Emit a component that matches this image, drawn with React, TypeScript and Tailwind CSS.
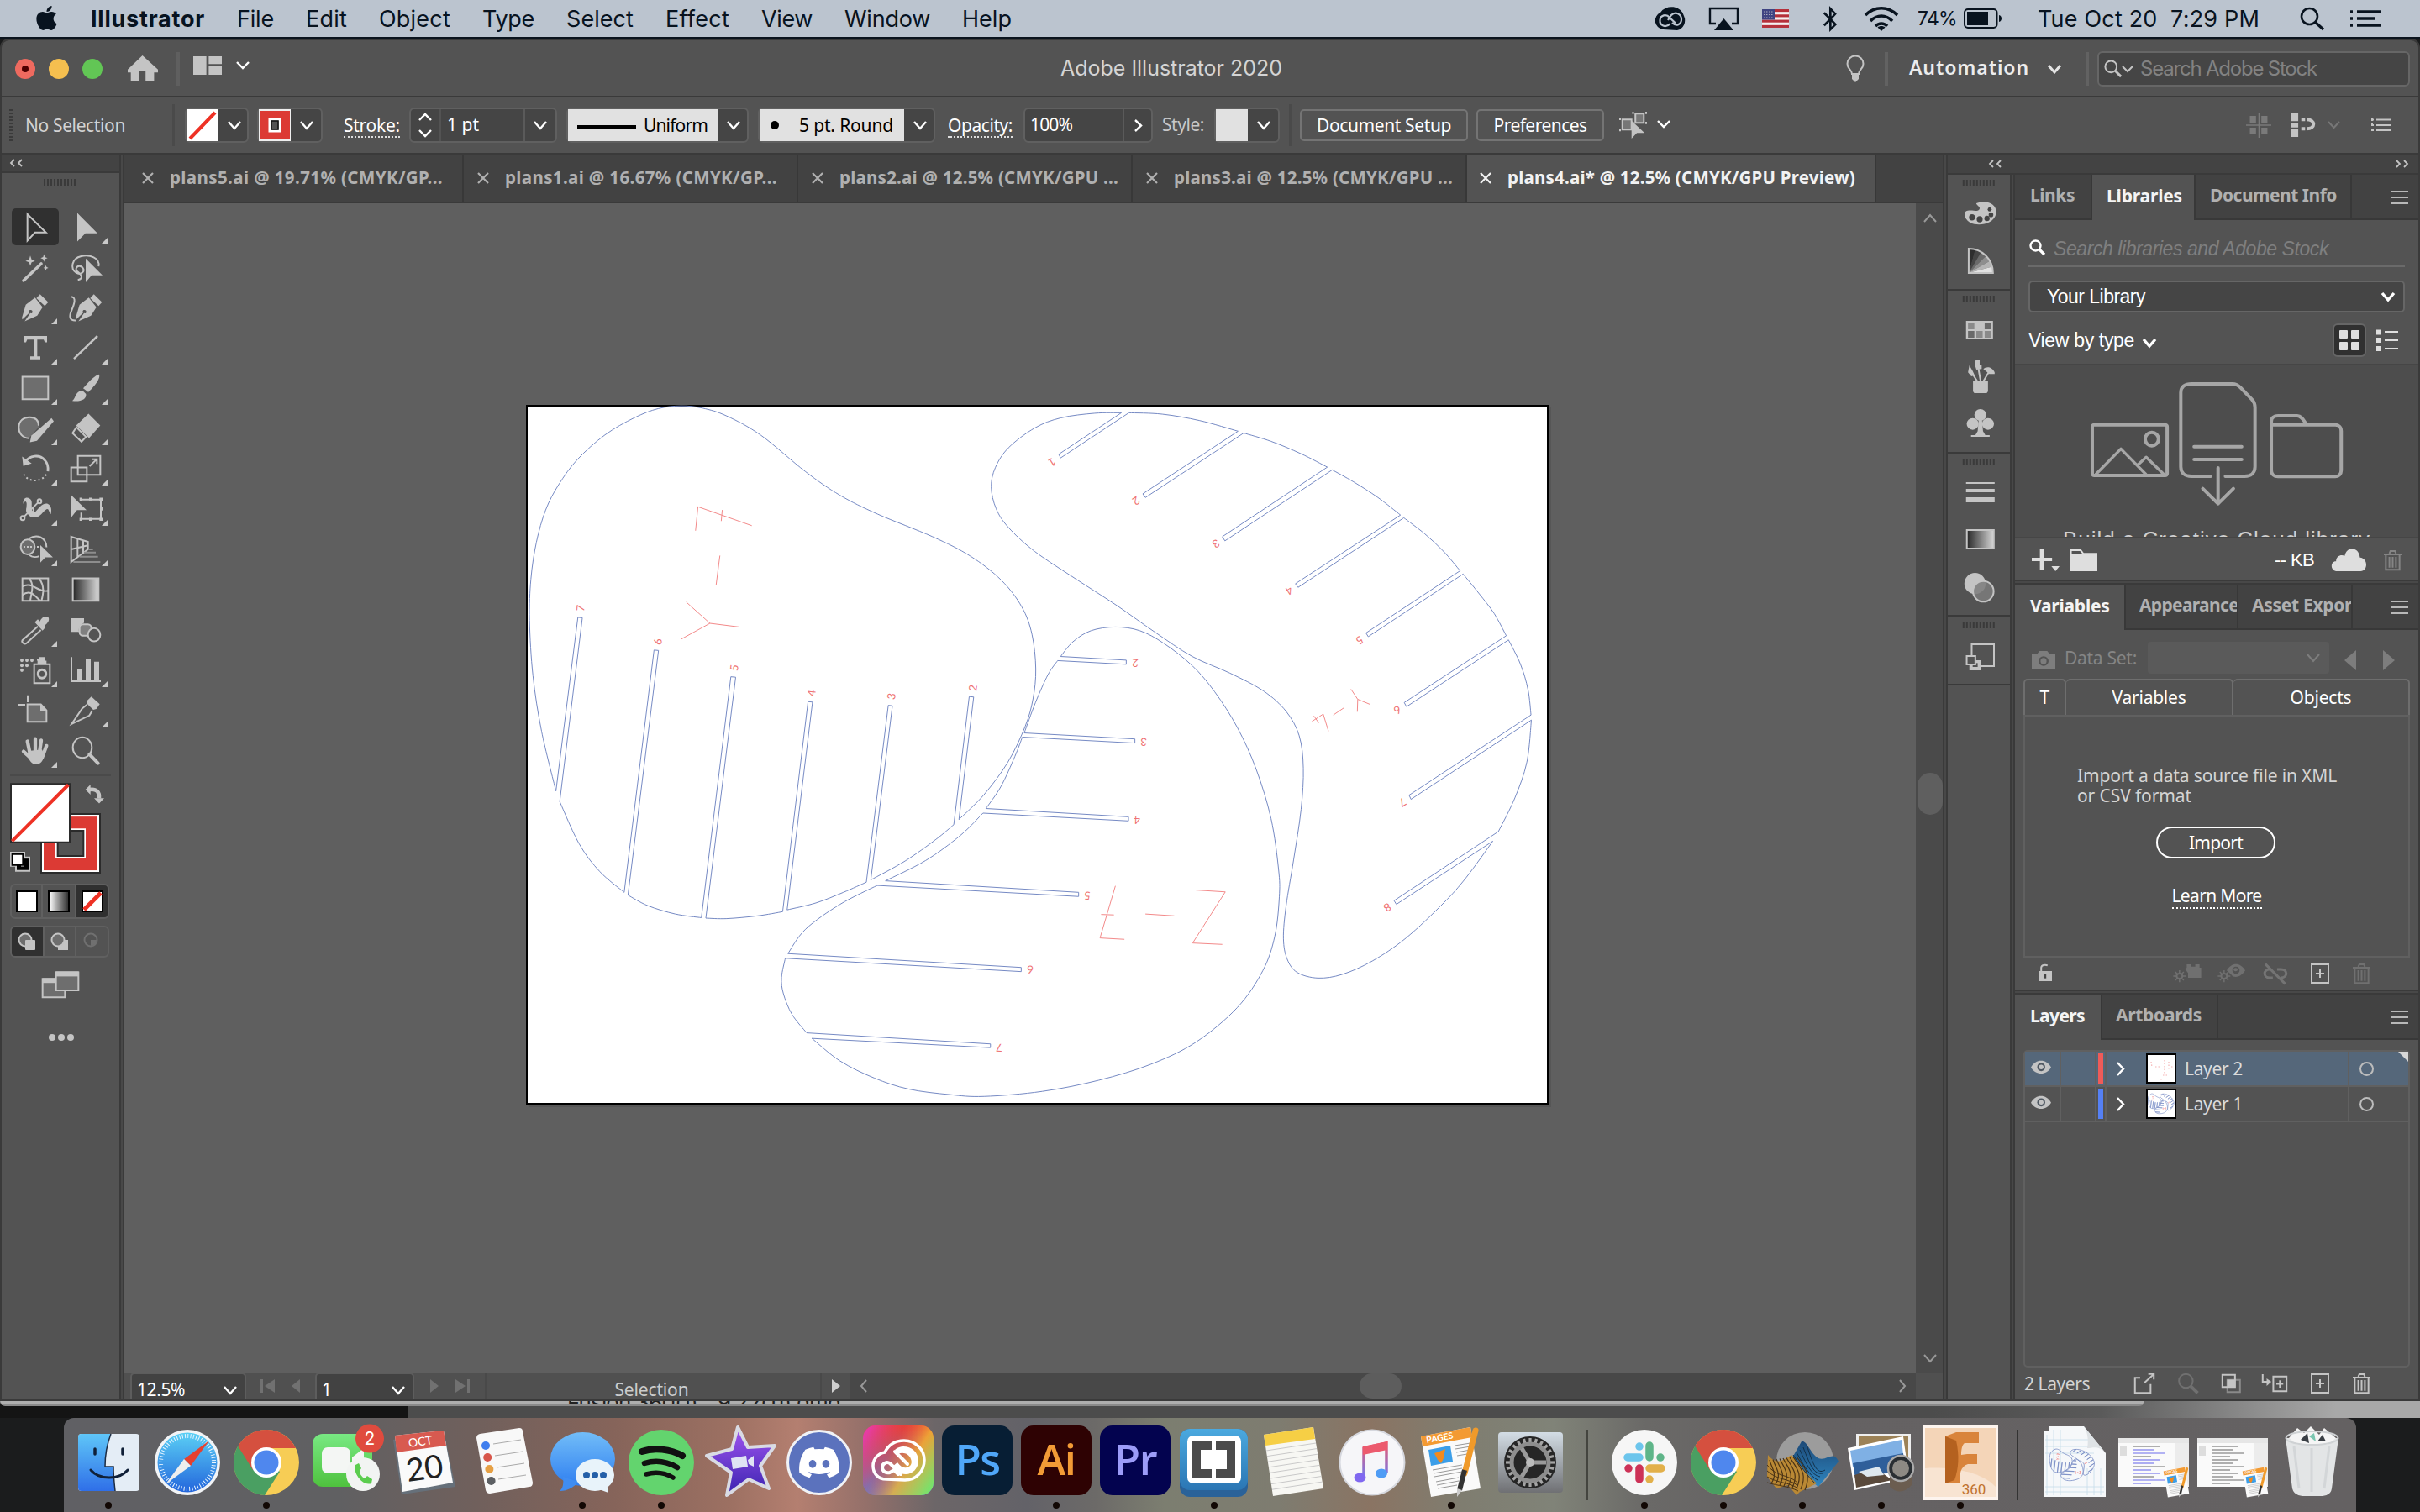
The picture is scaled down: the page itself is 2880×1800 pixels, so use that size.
import React, { useLayoutEffect, useRef, useState } from "react";
import { FaApple, FaDiscord, FaBluetoothB } from "react-icons/fa";

type P = { children?: React.ReactNode; className?: string };
const G = "#c4c4c4";

/* Text that is tracked so that it fills a given width */
function Txt({ w, children, className = "" }: { w: number; children: string; className?: string }) {
  const ref = useRef<HTMLSpanElement>(null);
  const [ls, setLs] = useState(0);
  useLayoutEffect(() => {
    if (ref.current) setLs((w - ref.current.getBoundingClientRect().width) / children.length);
  }, [w, children]);
  return (
    <span ref={ref} className={"inline-block shrink-0 whitespace-pre " + className} style={{ letterSpacing: ls }}>
      {children}
    </span>
  );
}

function Ico({ b, w, h, className = "", children }: P & { b: number[]; w: number; h: number }) {
  return (
    <svg
      viewBox={b.join(" ")}
      width={w}
      height={h}
      preserveAspectRatio="none"
      fill="none"
      className={"block shrink-0 overflow-visible [&_*]:[vector-effect:non-scaling-stroke] " + className}
    >
      {children}
    </svg>
  );
}

function Chev({ className = "", d = "down", w = 14, h = 8, s = 2.4, c = "#fff" }: { className?: string; d?: string; w?: number; h?: number; s?: number; c?: string }) {
  const p: Record<string, string> = {
    down: "M0 0L50 100L100 0",
    up: "M0 100L50 0L100 100",
    left: "M100 0L0 50L100 100",
    right: "M0 0L100 50L0 100",
  };
  return (
    <Ico b={[0, 0, 100, 100]} w={w} h={h} className={className}>
      <path d={p[d]} stroke={c} strokeWidth={s} />
    </Ico>
  );
}

const UI = "font-['Noto_Sans',sans-serif]";
const SF = "font-['Inter',sans-serif]";
const HV = "font-['Liberation_Sans',sans-serif]";

/* ---------------------------------------------------------------- menu bar */

const menus: [string, number][] = [["File", 44], ["Edit", 49], ["Object", 85], ["Type", 62], ["Select", 80], ["Effect", 76], ["View", 61], ["Window", 102], ["Help", 59]];

function MenuBar() {
  return (
    <div className={"flex h-[44px] items-center bg-[#bbc4cf] text-[27px] leading-[44px] text-[#08131f] " + SF}>
      <FaApple className="ml-[40px] h-[33px] w-[31px] -translate-y-px" />
      <Txt w={136} className="ml-[37px] pt-px font-bold">Illustrator</Txt>
      <div className="ml-[38px] flex gap-[38px] pt-px">
        {menus.map(([m, w]) => <Txt key={m} w={w}>{m}</Txt>)}
      </div>
      <div className="ml-auto flex items-center pr-[46px]">
        <Ico b={[0, 0, 39, 27]} w={39} h={27}>
          <path d="M11 26A10.500 10.500 0 0 1 8 6A15 13 0 0 1 36 10A12 12 0 0 1 28 27Z" fill="#08131f" />
          <path d="M20 19C14 25 7 21 7.500 15C8 9 15 7 19 12L26 18.500M17 15L21 9C26 4 33 8 33 14C33 20 27 23 22 18" stroke="#bbc4cf" strokeWidth="2.200" />
        </Ico>
        <Ico b={[0, 0, 37, 28]} w={37} h={28} className="ml-[26px]">
          <path d="M9 20H2V2H35V20H28" stroke="#08131f" strokeWidth="2.400" />
          <path d="M18.500 14L30 28H7Z" fill="#08131f" />
        </Ico>
        <Ico b={[0, 0, 32, 22]} w={32} h={22} className="ml-[27px]">
          <rect width="32" height="22" fill="#f4f0f0" />
          {[0, 2, 4, 6].map((i) => <rect key={i} y={i * 3.14} width="32" height="3.140" fill="#b5303a" />)}
          <rect width="15" height="12.500" fill="#3f4482" />
          <path d="M2 3H14M2 6.500H14M2 10H14" stroke="#aab" strokeDasharray="1.500 1.500" />
        </Ico>
        <FaBluetoothB className="ml-[37px] h-[31px] w-[24px]" />
        <Ico b={[0, 0, 42, 29]} w={42} h={29} className="ml-[28px]">
          <path d="M2 10C13 -1 29 -1 40 10M8 17C16 9 26 9 34 17M14 23C18 19 24 19 28 23" stroke="#08131f" strokeWidth="3.600" />
          <path d="M16.500 24.500C19 22.500 23 22.500 25.500 24.500L21 29Z" fill="#08131f" />
        </Ico>
        <Txt w={47} className="ml-[22px] text-[23px]">74%</Txt>
        <Ico b={[0, 0, 47, 24]} w={47} h={24} className="ml-[8px]">
          <rect x="1" y="1" width="38.500" height="22" rx="4" stroke="#08131f" strokeWidth="2" />
          <rect x="4" y="4" width="25" height="16" fill="#08131f" />
          <path d="M42 8C46 9 46 15 42 16Z" fill="#08131f" />
        </Ico>
        <Txt w={264} className="ml-[41px] pt-px">Tue Oct 20  7:29 PM</Txt>
        <Ico b={[0, 0, 30, 28]} w={30} h={28} className="ml-[48px]">
          <circle cx="11.500" cy="11.500" r="9.500" stroke="#08131f" strokeWidth="2.600" />
          <path d="M18.500 18.500L28 27" stroke="#08131f" strokeWidth="3.200" />
        </Ico>
        <Ico b={[0, 0, 37, 20]} w={37} h={20} className="ml-[30px]">
          <path d="M0 2H3M8 2H37M0 10H3M8 10H30M0 18H3M8 18H37" stroke="#08131f" strokeWidth="3.600" />
        </Ico>
      </div>
    </div>
  );
}

/* --------------------------------------------------------------- title bar */

function TitleBar() {
  return (
    <div className="relative flex h-[66px] items-center bg-[#535353] pt-px">
      <div className="ml-[16px] flex gap-[16px]">
        <div className="flex size-[24px] items-center justify-center rounded-full bg-[#ee6a5f]"><div className="size-[8px] rounded-full bg-[#4d0000]" /></div>
        <div className="size-[24px] rounded-full bg-[#f5bf4f]" />
        <div className="size-[24px] rounded-full bg-[#62c655]" />
      </div>
      <Ico b={[166, 195, 39, 93]} w={36} h={31} className="ml-[30px]">
        <path d="M185 195L205 245V256H200V288H189V252H181V288H170V256H166V245Z" fill={G} />
      </Ico>
      <div className="ml-[22px] h-[40px] w-[4px] bg-[#5f5f5f]" />
      <Ico b={[250, 198, 37, 66]} w={34} h={22} className="mb-[8px] ml-[16px]">
        <path d="M250 198H267V264H250ZM270 198H287V226H270ZM270 234H287V264H270Z" fill={G} />
      </Ico>
      <Chev w={14} h={7} className="mb-[8px] ml-[18px]" />
      <div className="absolute inset-x-0 flex justify-center pr-[92px] text-[25px] text-[#d4d4d4]">
        <Txt w={264} className={SF}>Adobe Illustrator 2020</Txt>
      </div>
      <div className="ml-auto flex items-center">
        <Ico b={[0, 0, 22, 32]} w={22} h={32} className="mr-[24px]">
          <path d="M7 22C7 17 1.500 16 1.500 10A9.500 9.500 0 0 1 20.500 10C20.500 16 15 17 15 22Z" stroke={G} strokeWidth="2" />
          <path d="M7 22H15V28L11 32L7 28Z" fill={G} />
        </Ico>
        <div className="h-[40px] w-[4px] bg-[#626262]" />
        <Txt w={143} className={"-mt-[3px] ml-[25px] text-[23px] font-semibold text-[#ececec] " + UI}>Automation</Txt>
        <Chev w={14} h={8} s={3} className="ml-[23px]" c="#e4e4e4" />
        <div className="ml-[30px] h-[40px] w-[4px] bg-[#626262]" />
        <div className="mr-[10px] ml-[10px] flex h-[42px] w-[372px] items-center rounded-[6px] border-2 border-[#666] bg-[#454545]">
          <Ico b={[0, 0, 24, 24]} w={22} h={22} className="ml-[6px]">
            <circle cx="9" cy="9" r="7.500" stroke={G} strokeWidth="2" />
            <path d="M14.500 14.500L22 22" stroke={G} strokeWidth="3" />
          </Ico>
          <Chev w={12} h={6} s={2} c={G} />
          <Txt w={210} className={"ml-[9px] text-[24px] text-[#828282] " + SF}>Search Adobe Stock</Txt>
        </div>
      </div>
    </div>
  );
}

/* ------------------------------------------------------------- control bar */

const field = "flex h-[42px] shrink-0 items-center rounded-[6px] border-2 border-[#606060] bg-[#454545] ";

function ControlBar() {
  return (
    <div className={"flex h-[66px] items-center bg-[#535353] text-[21px] text-white " + UI}>
      <div className="ml-[9px] h-[38px] w-[4px] bg-[repeating-linear-gradient(#3a3a3a_0_2px,transparent_2px_4px)]" />
      <Txt w={119} className="ml-[15px] pt-px text-[#d2d2d2]">No Selection</Txt>
      <div className="ml-[56px] h-[50px] w-[3px] bg-[#4a4a4a]" />
      <div className={field + "ml-[12px] w-[76px]"}>
        <Ico b={[0, 0, 38, 38]} w={38} h={38}>
          <rect width="38" height="38" fill="#fff" />
          <path d="M4 35L34 4" stroke="#ee3124" strokeWidth="4" />
        </Ico>
        <Chev className="ml-[12px]" />
      </div>
      <div className={field + "ml-[10px] w-[78px]"}>
        <Ico b={[0, 0, 38, 38]} w={38} h={38}>
          <rect width="38" height="38" fill="#eee" />
          <rect x="1" y="2" width="36" height="34" fill="#dc3a34" />
          <rect x="13" y="12" width="12" height="14" fill="#535353" stroke="#fff" strokeWidth="3" />
          <rect x="15" y="14" width="8" height="10" stroke="#111" strokeWidth="1.500" />
        </Ico>
        <Chev className="ml-[12px]" />
      </div>
      <div className="mt-[3px] ml-[25px] border-b-2 border-dotted border-[#ddd] leading-[25px]"><Txt w={67}>Stroke:</Txt></div>
      <div className={field + "ml-[11px] w-[176px]"}>
        <div className="flex h-full w-[36px] flex-col items-center justify-between border-r-2 border-[#535353] py-[6px]">
          <Chev d="up" h={7} /><Chev h={7} />
        </div>
        <Txt w={38} className="ml-[7px]">1 pt</Txt>
        <div className="ml-auto flex h-full w-[38px] items-center justify-center border-l-2 border-[#5a5a5a]"><Chev /></div>
      </div>
      <div className={field + "ml-[11px] w-[217px]"}>
        <div className="flex h-[38px] w-[178px] items-center bg-[#e1e1e1] text-black">
          <div className="mt-[3px] ml-[11px] h-[4px] w-[70px] bg-black" />
          <Txt w={76} className="mt-[2px] ml-[9px]">Uniform</Txt>
        </div>
        <Chev className="ml-[12px]" />
      </div>
      <div className={field + "ml-[11px] w-[211px]"}>
        <div className="flex h-[38px] w-[172px] items-center bg-[#e1e1e1] text-black">
          <div className="ml-[13px] size-[10px] rounded-full bg-black" />
          <Txt w={112} className="mt-[2px] ml-[24px]">5 pt. Round</Txt>
        </div>
        <Chev className="ml-[12px]" />
      </div>
      <div className="mt-[2px] ml-[15px] border-b-2 border-dotted border-[#ddd] leading-[25px]"><Txt w={77}>Opacity:</Txt></div>
      <div className={field + "ml-[13px] w-[154px]"}>
        <Txt w={50} className="ml-[6px]">100%</Txt>
        <div className="ml-auto flex h-full w-[34px] items-center justify-center border-l-2 border-[#5a5a5a]"><Chev d="right" w={7} h={13} /></div>
      </div>
      <Txt w={50} className="ml-[11px] text-[#c8c8c8]">Style:</Txt>
      <div className={field + "ml-[12px] w-[78px]"}>
        <div className="h-[38px] w-[38px] bg-[#e1e1e1]" />
        <Chev className="ml-[12px]" />
      </div>
      <div className="ml-[11px] h-[50px] w-[3px] bg-[#4a4a4a]" />
      <div className="ml-[10px] flex h-[38px] w-[200px] items-center justify-center rounded-[5px] border-2 border-[#747474] pt-[2px]"><Txt w={160}>Document Setup</Txt></div>
      <div className="ml-[10px] flex h-[38px] w-[152px] items-center justify-center rounded-[5px] border-2 border-[#747474] pt-[2px]"><Txt w={111}>Preferences</Txt></div>
      <Ico b={[534, 396, 34, 96]} w={31} h={32} className="ml-[19px]">
        <path d="M554 403H565V436H554ZM537 424H549V460H537Z" fill="#777" stroke={G} strokeWidth="2" />
        <path d="M551 396V404M568 396V404M551 440V432M568 440V432M534 418V426M534 466V458" stroke={G} strokeWidth="2" />
        <path d="M549 428L566 472L556 472L549 492Z" fill={G} />
      </Ico>
      <Chev h={7} className="mb-[4px] ml-[14px]" />
      <div className="ml-auto flex items-center pr-[32px] pb-px">
        <Ico b={[1339, 396, 33, 90]} w={30} h={30} className="mr-[23px]">
          <path d="M1344 408H1352V432H1344ZM1359 408H1367V432H1359ZM1344 450H1352V474H1344ZM1359 450H1367V474H1359Z" fill="#7a7a7a" />
          <path d="M1339 441H1372M1356 396V486" stroke="#7a7a7a" strokeWidth="1.500" />
        </Ico>
        <Ico b={[1397, 402, 33, 84]} w={30} h={28} className="mr-[15px]">
          <path d="M1397 402H1407V430H1397ZM1397 437H1407V452H1397ZM1397 459H1407V486H1397Z" fill={G} />
          <path d="M1411 424H1416M1411 457H1416" stroke={G} strokeWidth="4" />
          <path d="M1418 424C1430 424 1430 457 1418 457" stroke={G} strokeWidth="4" />
        </Ico>
        <Chev w={13} h={7} c="#777" s={2} />
        <Ico b={[0, 0, 24, 17]} w={24} h={17} className="ml-[38px]">
          <path d="M1 1V4M1 7V10M1 13V16M0 2.500H3M0 9H3M0 15H3M6 2.500H24M6 9H24M6 15H24" stroke={G} strokeWidth="2" />
        </Ico>
      </div>
    </div>
  );
}

/* ----------------------------------------------------------------- toolbar */

function Corner() {
  return <div className="absolute right-[4px] bottom-[4px] size-0 border-b-[7px] border-l-[7px] border-b-[#c9c9c9] border-l-transparent" />;
}

const S = { stroke: G, strokeWidth: 2 };
const F = { fill: G };
const tools: [React.ReactNode, boolean][] = [
  [<path d="M98 210V298L125 271H164Z" {...S} />, false],
  [<path d="M276 206V301L305 274H348Z" {...F} />, true],
  [<g><path d="M84 431L147 375" stroke={G} strokeWidth="3.600" strokeLinecap="round" /><path d="M108 348L113 361L125 366L113 370L108 382L104 370L91 366L104 361ZM157 343L160 353L170 356L160 360L157 369L154 360L145 356L154 353ZM164 380L166 386L173 389L166 391L164 398L161 391L155 389L161 386Z" {...F} /></g>, false],
  [<g><path d="M352 384C358 355 320 344 290 350C255 357 250 392 272 405C290 415 305 400 295 388C280 375 265 390 275 400C290 410 300 425 278 429" {...S} /><path d="M306 358V437L327 414H366Z" {...F} /></g>, false],
  [<g><path d="M78 556L92 512L125 488L152 520L133 548L88 567L108 540C118 543 119 530 110 529C102 529 103 535 105 538L80 561Z" {...F} /><path d="M143 477L172 503L160 516L130 490Z" {...F} /></g>, true],
  [<g><path d="M252 485C275 485 265 510 255 532C245 555 250 565 270 564" {...S} /><path d="M270 556L284 512L317 488L344 520L325 548L280 567L300 540C310 543 311 530 302 529C294 529 295 535 297 538L272 561Z" {...F} /><path d="M335 477L364 503L352 516L322 490Z" {...F} /></g>, false],
  [<path d="M84 616H168V637H160L156 628H133V684H144V694H108V684H120V628H97L93 637H84Z" {...F} />, true],
  [<path d="M264 692L348 616" stroke={G} strokeWidth="2.500" />, true],
  [<rect x="80" y="752" width="92" height="75" fill="#6e6e6e" stroke={G} strokeWidth="2" />, true],
  [<g><path d="M354 744C360 760 330 790 315 803L297 790C310 775 340 745 354 744Z" {...F} /><path d="M294 797L307 809C310 828 285 836 258 832C272 822 268 800 294 797Z" {...F} /></g>, true],
  [<g><path d="M103 957C80 955 66 940 67 920C68 898 85 886 107 887C130 888 140 900 138 920Z" fill="#6e6e6e" /><path d="M103 957C80 955 66 940 67 920C68 898 85 886 107 887C130 888 138 900 138 915" stroke={G} strokeWidth="2" /><path d="M184 890L192 900L132 965L107 970L112 948Z" {...F} /></g>, true],
  [<g><path d="M316 875L358 914L318 956L272 914Z" {...F} /><path d="M273 920L307 952L291 968L259 940Z" {...S} /></g>, true],
  [<g><path d="M90 1035C105 1015 140 1008 160 1030C170 1040 173 1050 171 1067" stroke={G} strokeWidth="2.800" /><path d="M79 1018L83 1049L113 1041Z" {...F} /><path d="M85 1077C100 1105 150 1105 167 1075" stroke={G} strokeWidth="2" strokeDasharray="2 3" /></g>, true],
  [<path d="M278 1016H358V1079H278ZM254 1054H310V1101H254ZM320 1050L344 1028M330 1027H346V1042" {...S} />, true],
  [<g><path d="M83 1175C80 1150 105 1150 112 1165C117 1180 105 1200 125 1203C140 1190 150 1172 170 1175C185 1182 184 1195 182 1210L175 1200C170 1180 155 1205 140 1216C125 1225 100 1222 95 1200C92 1185 100 1172 90 1167Z" {...F} /><path d="M85 1219L137 1170" {...S} /><circle cx="81" cy="1223" r="7" fill="#535353" {...S} /><circle cx="141" cy="1167" r="7" fill="#535353" {...S} /><circle cx="108" cy="1197" r="12" {...S} /></g>, true],
  [<g><path d="M290 1161H360V1226H290V1205" {...S} /><path d="M284 1155H294V1165H284ZM318 1155H329V1164H318ZM355 1155H366V1165H355ZM355 1222H366V1232H355ZM318 1222H329V1232H318ZM284 1222H294V1232H284ZM358 1187H366V1198H358Z" {...F} /><path d="M253 1145V1222L275 1196H309Z" {...F} /></g>, true],
  [<g><circle cx="99" cy="1319" r="25" fill="#6e6e6e" {...S} /><path d="M103 1292C130 1275 165 1285 166 1320M105 1346C115 1354 130 1354 140 1350" {...S} /><path d="M84 1319H140" stroke={G} strokeWidth="2" strokeDasharray="2 2" /><path d="M144 1313V1371L162 1354H189Z" {...F} /></g>, true],
  [<g><path d="M254 1285L314 1302V1327L254 1369ZM277 1291V1354M297 1297V1340M254 1327L314 1314" {...S} /><path d="M316 1327H332M300 1338H342M284 1352H350M262 1369H358" stroke="#8d8d8d" strokeWidth="2" /></g>, true],
  [<path d="M80 1424H172V1499H80ZM80 1452C110 1430 140 1475 172 1465M80 1480C110 1455 130 1490 145 1499M105 1424C125 1450 110 1475 108 1499M140 1424C160 1450 155 1475 148 1499" {...S} />, false],
  [<rect x="260" y="1424" width="92" height="75" fill="url(#ramp)" stroke={G} strokeWidth="2" />, false],
  [<g><path d="M135 72L80 118C75 128 90 133 96 127L146 84" {...S} /><path d="M124 58L135 48L143 55C150 38 165 36 173 42C178 52 170 62 160 68L163 74L152 86Z" {...F} /></g>, true],
  [<g><path d="M252 45H300V60C285 64 280 75 282 90H252Z" {...F} /><rect x="284" y="65" width="42" height="38" rx="12" fill="#808080" stroke={G} strokeWidth="2" /><circle cx="336" cy="100" r="22" fill="#535353" {...S} /></g>, false],
  [<g><path d="M122 198H178V261H122Z" {...S} /><circle cx="150" cy="230" r="14" stroke={G} strokeWidth="3" /><path d="M138 174H162V186H166V196H134V186H132V179H138Z" {...F} />{[[78, 185], [96, 185], [114, 185], [78, 202], [96, 202], [78, 218]].map(([x, y]) => <circle key={x + "-" + y} cx={x} cy={y} r="6" {...F} />)}</g>, true],
  [<g><path d="M255 174V255H360" {...S} /><path d="M276 213H294V255H276ZM306 179H324V255H306ZM336 190H354V255H336Z" {...F} /></g>, true],
  [<g><path d="M66 333H90M99 302V325" stroke={G} strokeWidth="2" /><path d="M98 332H146L166 352V390H98Z" fill="#6e6e6e" {...S} /><path d="M144 332V353H167Z" {...F} /></g>, false],
  [<g><path d="M326 306L356 331L344 347L333 350L309 328L313 318Z" {...F} /><path d="M310 333L293 346L256 397L319 369L330 352" {...S} /></g>, true],
  [<g><path d="M108 500L98 455M126 500L126 447M140 500L147 452M150 510L166 470M115 515L84 489" stroke={G} strokeWidth="4.300" strokeLinecap="round" /><path d="M103 487L150 482L158 500C155 520 145 532 128 532C112 532 105 518 98 505Z" {...F} /></g>, true],
  [<g><circle cx="294" cy="476" r="34" {...S} /><path d="M319 498L350 528" stroke={G} strokeWidth="4" strokeLinecap="round" /></g>, false],
];

function Toolbar() {
  return (
    <div className="flex w-[140px] shrink-0 flex-col bg-[#535353]">
      <div className="h-[22px] border-b-2 border-[#3a3a3a] bg-[#434343] pt-[6px] pl-[11px]">
        <div className="flex gap-[5px]"><Chev d="left" w={4} h={8} s={1.800} c={G} /><Chev d="left" w={4} h={8} s={1.800} c={G} /></div>
      </div>
      <div className="mt-[7px] ml-[50px] h-[8px] w-[38px] bg-[repeating-linear-gradient(90deg,#3a3a3a_0_2px,transparent_2px_4px)]" />
      <div className="mt-[25px] ml-[10px] grid w-[120px] grid-cols-2">
        {tools.map(([art, more], i) => {
          const r = Math.floor(i / 2);
          const y = r < 10 ? 184.8 + 134.4 * r : 16.8 + 134.4 * (r - 10);
          return (
            <div key={i} className="relative h-[48px] w-[60px]">
              {i === 0 && <div className="absolute top-[2px] left-[2px] h-[44px] w-[56px] rounded-[5px] bg-[#303030]" />}
              <Ico b={[i % 2 ? 216 : 36, y, 180, 134.4]} w={60} h={48} className="relative">{art}</Ico>
              {more && <Corner />}
            </div>
          );
        })}
      </div>
      <div className="mt-[4px] ml-[10px] h-[2px] w-[120px] bg-[#4a4a4a]" />
      <Ico b={[36, 588, 324, 308]} w={108} h={110} className="mt-[6px] ml-[10px]">
        <rect x="147" y="697" width="210" height="196" fill="#fff" stroke="#2b2b2b" strokeWidth="2" />
        <rect x="156" y="706" width="192" height="179" fill="#dc3a34" />
        <rect x="201" y="748" width="102" height="94" fill="#535353" stroke="#fff" strokeWidth="2" />
        <rect x="206" y="753" width="92" height="84" stroke="#2b2b2b" strokeWidth="2" />
        <rect x="39" y="597" width="210" height="195" fill="#fff" stroke="#2b2b2b" strokeWidth="2" />
        <path d="M43 788L244 600" stroke="#ee3124" strokeWidth="4" />
        <path d="M320 616C345 612 356 625 354 645" stroke={G} strokeWidth="4.500" />
        <path d="M305 616L323 599V633ZM336 645H372L354 662Z" {...F} />
        <path d="M36 823H90V839H108V890H54V873H36Z" fill={G} />
        <rect x="60" y="846" width="42" height="38" fill="#000" />
        <rect x="75" y="860" width="12" height="12" fill="#fff" />
        <rect x="44" y="831" width="38" height="36" fill="#fff" stroke="#000" strokeWidth="2" />
      </Ico>
      <div className="mt-[12px] ml-[10px] flex h-[42px] w-[118px] rounded-[6px] border-2 border-[#606060]">
        <div className="flex w-[37px] items-center justify-center border-r-2 border-[#606060]"><div className="size-[26px] border-2 border-black bg-white" /></div>
        <div className="flex w-[40px] items-center justify-center border-r-2 border-[#606060]"><div className="size-[26px] border-2 border-black bg-gradient-to-r from-white to-[#333]" /></div>
        <div className="flex flex-1 items-center justify-center rounded-r-[4px] bg-[#303030]">
          <Ico b={[0, 0, 26, 26]} w={26} h={26}><rect x="1" y="1" width="24" height="24" fill="#fff" stroke="#000" strokeWidth="2" /><path d="M3 23L23 3" stroke="#ee3124" strokeWidth="5" /></Ico>
        </div>
      </div>
      <div className="mt-[8px] ml-[10px] flex h-[38px] w-[118px] rounded-[6px] border-2 border-[#606060]">
        {[0, 1, 2].map((i) => (
          <div key={i} className={"flex flex-1 items-center justify-center " + (i < 2 ? "border-r-2 border-[#606060] " : "") + (i === 0 ? "rounded-l-[4px] bg-[#303030]" : "")}>
            <Ico b={[0, 0, 20, 20]} w={20} h={20}>
              <circle cx="8" cy="8" r="7.500" fill={i === 2 ? "#535353" : "#6e6e6e"} stroke={i === 2 ? "#707070" : G} strokeWidth="2" />
              {i === 0 && <rect x="8" y="8" width="12" height="12" rx="1" fill={G} />}
              {i === 1 && <path d="M16 8H20V20H8V16C13 15 15 13 16 8Z" fill={G} />}
              {i === 2 && <path d="M8 8H15L14 13L8 15Z" fill="#707070" />}
            </Ico>
          </div>
        ))}
      </div>
      <Ico b={[150, 1220, 132, 90]} w={44} h={32} className="mt-[16px] ml-[48px]">
        <path d="M152 1246H232V1308H152Z" fill="#6e6e6e" stroke={G} strokeWidth="2" /><path d="M152 1244H200V1260H152Z" {...F} />
        <path d="M200 1224H280V1285H200Z" fill="#6e6e6e" stroke={G} strokeWidth="2" /><path d="M199 1221H281V1238H199Z" {...F} />
      </Ico>
      <div className="mt-[43px] ml-[56px] flex gap-[3px]">
        {[0, 1, 2].map((i) => <div key={i} className="size-[8px] rounded-full bg-[#c4c4c4]" />)}
      </div>
    </div>
  );
}

/* ----------------------------------------------------------------- artwork */

type Pt = [number, number];
/* Catmull-Rom spline through the points, as cubic segments */
function curve(p: Pt[]): string {
  let s = "";
  for (let i = 0; i < p.length - 1; i++) {
    const a = p[i - 1] || p[i], b = p[i], c = p[i + 1], d = p[i + 2] || c;
    s += `C${b[0] + (c[0] - a[0]) / 6} ${b[1] + (c[1] - a[1]) / 6} ${c[0] - (d[0] - b[0]) / 6} ${c[1] - (d[1] - b[1]) / 6} ${c[0]} ${c[1]}`;
  }
  return s;
}
/* Alternates curved outline runs with the straight slots between them */
function outline(runs: Pt[][]): string {
  return runs.map((r, i) => (i === 0 ? `M${r[0]}` : `L${r[0]}`) + (i % 2 === 0 ? curve(r) : r.map((q) => `L${q}`).join(""))).join("") + "Z";
}

const shapeA = outline([
  [[102, 860], [60, 730], [35, 610], [25, 490], [29, 400], [45, 320], [72, 250], [110, 195], [165, 140], [245, 87], [330, 50], [400, 30], [467, 24], [530, 29], [600, 46], [700, 88], [830, 167], [930, 218], [1040, 259], [1200, 308], [1310, 350], [1400, 402], [1460, 460], [1490, 520], [1501, 595], [1493, 660], [1470, 720], [1420, 797], [1350, 868], [1277, 922]],
  [[1320, 656], [1307, 655]], [[1262, 933], [1210, 965], [1120, 1012], [1020, 1053]],
  [[1083, 675], [1071, 674]], [[1007, 1058], [940, 1080], [860, 1103], [776, 1118]],
  [[850, 667], [837, 666]], [[763, 1122], [690, 1131], [600, 1137], [539, 1136]],
  [[626, 613], [612, 612]], [[526, 1135], [450, 1127], [370, 1109], [312, 1086]],
  [[401, 555], [388, 554]], [[301, 1080], [230, 1035], [170, 975], [113, 883]],
  [[179, 484], [166, 483]],
]);
const shapeB = outline([
  [[391, 39], [320, 40], [230, 50], [160, 72], [90, 115], [55, 158], [44, 200], [57, 247], [90, 288], [160, 340], [270, 400], [380, 458], [480, 515], [580, 568], [680, 604], [770, 643], [830, 687], [865, 740], [876, 810], [870, 900], [850, 1010], [830, 1110], [823, 1180], [833, 1225], [860, 1254], [915, 1266], [980, 1258], [1060, 1229], [1150, 1179], [1250, 1103], [1310, 1048], [1381, 969]],
  [[1124, 1106], [1118, 1098]], [[1396, 948], [1440, 875], [1472, 797], [1484, 706]],
  [[1163, 878], [1158, 869]], [[1483, 695], [1475, 640], [1455, 585], [1423, 532]],
  [[1151, 677], [1145, 668]], [[1417, 523], [1385, 475], [1345, 432], [1302, 389]],
  [[1049, 525], [1043, 517]], [[1294, 382], [1250, 340], [1200, 302], [1144, 267]],
  [[862, 418], [855, 410]], [[1135, 261], [1075, 223], [1010, 189], [953, 163]],
  [[667, 317], [660, 308]], [[940, 157], [870, 128], [790, 101], [717, 83]],
  [[455, 223], [448, 215]], [[702, 79], [600, 56], [500, 42], [411, 39]],
  [[229, 137], [224, 129]],
]);
const shapeC = outline([
  [[229, 568], [262, 536], [310, 512], [375, 504], [440, 512], [505, 540], [580, 588], [640, 645], [700, 722], [750, 812], [790, 920], [810, 1030], [812, 1090], [800, 1175], [768, 1250], [700, 1330], [590, 1405], [470, 1453], [330, 1488], [180, 1512], [25, 1523], [-67, 1519], [-176, 1507], [-268, 1483], [-359, 1446], [-434, 1397]],
  [[42, 1417], [42, 1409]], [[-448, 1385], [-487, 1345], [-510, 1300], [-515, 1265], [-505, 1223]],
  [[124, 1252], [124, 1243]], [[-498, 1213], [-451, 1160], [-359, 1106], [-260, 1065]],
  [[277, 1089], [277, 1080]], [[-238, 1055], [-131, 1011], [-39, 957], [22, 908]],
  [[410, 925], [410, 916]], [[30, 898], [70, 850], [107, 785], [127, 743]],
  [[427, 756], [427, 747]], [[132, 734], [162, 668], [195, 608], [221, 577]],
  [[404, 585], [404, 576]],
]);
const marks: [string, number, number, number][] = [
  ["7", 691, 724, -83], ["6", 783, 764, -83], ["5", 874, 795, -83], ["4", 966, 825, -83], ["3", 1061, 829, -83], ["2", 1158, 819, -83],
  ["2", 1351, 789, 182], ["3", 1361, 883, 182], ["4", 1353, 976, 182], ["5", 1294, 1066, 182], ["6", 1226, 1154, 182], ["7", 1189, 1247, 182],
  ["1", 1252, 550, 147], ["2", 1352, 596, 147], ["3", 1447, 647, 147], ["4", 1534, 703, 147], ["5", 1618, 762, 147], ["6", 1663, 845, 147], ["7", 1669, 955, 147], ["8", 1651, 1080, 147],
];

function Shapes({ sw = 1 }: { sw?: number }) {
  const blue = { stroke: "#768ac4", strokeWidth: sw };
  const red = { stroke: "#f38a8a", strokeWidth: sw };
  return (
    <>
      <g transform="translate(620 470) scale(.408163 .548444)">
        <path d={shapeA} {...blue} />
        <path d="M509 295L516 243L673 284M587 250L584 274M580 349L569 413M482 450L551 496L468 530M551 496L637 504" {...red} />
      </g>
      <g transform="translate(1160 470) scale(.446429 .548444)">
        <path d={shapeB} {...blue} />
        <path d={shapeC} {...blue} />
        <path d="M375 1066L334 1179L399 1182M337 1128L371 1129M455 1127L532 1131M589 1075L668 1079L581 1190L660 1193M1003 639L1021 661L1054 672M1021 661L1020 688M956 695L985 679M943 730L929 693L899 709M904 697L917 712" {...red} />
      </g>
    </>
  );
}

function Canvas() {
  return (
    <div className="h-[1392px] w-[2132px] bg-[#5f5f5f] pt-[240px] pl-[478px]">
      <div className="h-[833px] w-[1217px] border-2 border-black bg-white shadow-[3px_3px_0_#565656]">
        <Ico b={[628, 484, 1213, 829]} w={1213} h={829}>
          <Shapes />
          {marks.map(([t, x, y, a], i) => (
            <text key={i} transform={`translate(${x} ${y}) rotate(${a})`} y="4.500" textAnchor="middle" fontSize="13" fontFamily="Lato, sans-serif" fontWeight="400" fill="#ef7272">{t}</text>
          ))}
        </Ico>
      </div>
    </div>
  );
}

const docs: [string, number, string][] = [
  ["plans5.ai @ 19.71% (CMYK/GP...", 325, "w-[404px] pl-[22px]"],
  ["plans1.ai @ 16.67% (CMYK/GP...", 324, "w-[398px] pl-[17px]"],
  ["plans2.ai @ 12.5% (CMYK/GPU ...", 332, "w-[398px] pl-[17px]"],
  ["plans3.ai @ 12.5% (CMYK/GPU ...", 332, "w-[398px] pl-[17px]"],
  ["plans4.ai* @ 12.5% (CMYK/GPU Preview)", 414, "w-[487px] pl-[16px] bg-[#535353] text-[#f2f2f2]"],
];

function Document() {
  const tri = (p: string, w: number, cls: string, c = "#717171") => <Ico b={[0, 0, w, 16]} w={w} h={16} className={cls}><path d={p} fill={c} /></Ico>;
  return (
    <div className="flex w-[2164px] shrink-0 flex-col">
      <div className={"flex h-[58px] border-b-2 border-[#3a3a3a] bg-[#424242] text-[20.5px] font-bold text-[#b0b0b0] " + UI}>
        {docs.map(([t, w, c]) => (
          <div key={t} className={"flex items-center border-r-2 border-[#383838] pb-px " + c}>
            <Ico b={[0, 0, 12, 12]} w={12} h={12} className="mt-px mr-[20px]"><path d="M0 0L12 12M12 0L0 12" stroke="currentColor" strokeWidth="2.200" /></Ico>
            <Txt w={w}>{t}</Txt>
          </div>
        ))}
      </div>
      <div className="flex">
        <div>
          <Canvas />
          <div className={"flex h-[32px] items-center bg-[#505050] text-[21px] text-white " + UI}>
            <div className="ml-[7px] flex h-[32px] w-[138px] items-center rounded-t-[5px] border-2 border-b-0 border-[#5d5d5d] bg-[#424242] pt-[7px]">
              <Txt w={57} className="ml-[6px]">12.5%</Txt>
              <Chev className="ml-auto mr-[10px]" w={14} h={8} />
            </div>
            {tri("M0 0H3V16H0ZM17 0V16L5 8Z", 17, "ml-[17px]")}
            {tri("M10 0V16L0 8Z", 10, "ml-[20px]")}
            <div className="ml-[18px] flex h-[32px] w-[118px] items-center rounded-t-[5px] border-2 border-b-0 border-[#5d5d5d] bg-[#424242] pt-[7px]">
              <Txt w={12} className="ml-[6px]">1</Txt>
              <Chev className="ml-auto mr-[10px]" w={14} h={8} />
            </div>
            {tri("M0 0V16L10 8Z", 10, "ml-[19px]")}
            {tri("M0 0V16L12 8ZM14 0H17V16H14Z", 17, "ml-[20px]")}
            <div className="ml-[18px] h-[30px] w-[2px] bg-[#494949]" />
            <div className="flex w-[397px] justify-center pt-[9px] pr-[4px] text-[#cbcbcb]"><Txt w={88}>Selection</Txt></div>
            <div className="h-[30px] w-[2px] bg-[#494949]" />
            {tri("M0 0V16L10 8Z", 10, "ml-[12px]", "#d0d0d0")}
            <div className="ml-auto flex h-[32px] w-[1268px] items-center bg-[#484848]">
              <Chev d="left" w={6} h={14} s={2} c="#999" className="ml-[13px]" />
              <div className="ml-[587px] h-[30px] w-[50px] rounded-[15px] bg-[#5d5d5d]" />
              <Chev d="right" w={6} h={14} s={2} c="#999" className="mr-[13px] ml-auto" />
            </div>
          </div>
        </div>
        <div className="flex w-[32px] flex-col">
          <div className="flex h-[1392px] flex-col items-center bg-[#4a4a4a]">
            <Chev d="up" s={2} c="#999" className="mt-[14px] ml-[2px]" />
            <div className="mt-[656px] ml-[2px] h-[50px] w-[30px] rounded-[15px] bg-[#5f5f5f]" />
            <Chev s={2} c="#999" className="mt-auto mb-[13px] ml-[2px]" />
          </div>
          <div className="h-[32px] bg-[#505050]" />
        </div>
      </div>
    </div>
  );
}

/* -------------------------------------------------------------- icon strip */

function Grip({ y }: { y: number }) {
  return <path d={`M240 ${y}m-48 0h96`} stroke="#3a3a3a" strokeWidth="8" strokeDasharray="2 2" />;
}

function Strip() {
  const line = "border-b-2 border-[#3a3a3a]";
  return (
    <div className="w-[74px] bg-[#535353]">
      <Ico b={[147, 84, 187, 408]} w={74} h={136}>
        <Grip y={114} />
        <path fillRule="evenodd" d="M233 186C270 170 298 195 292 225C285 260 240 270 214 255C195 240 192 215 207 212C225 208 240 220 243 205C244 197 232 192 233 186Z" {...F} />
        {[[220, 236, 9], [243, 243, 9], [265, 240, 8], [277, 227, 7], [273, 208, 6]].map(([x, y, r]) => <ellipse key={x} cx={x} cy={y} rx={r} ry={r * 1.25} fill="#444" />)}
        {["#2e2e2e", "#454545", "#6a6a6a", "#8e8e8e", "#b4b4b4", "#e2e2e2"].map((c, i) => {
          const a = (i * Math.PI) / 12, z = ((i + 1) * Math.PI) / 12;
          return <path key={c} d={`M211 434L${211 + 72 * Math.sin(a)} ${434 - 84 * Math.cos(a)}L${211 + 72 * Math.sin(z)} ${434 - 84 * Math.cos(z)}Z`} fill={c} />;
        })}
        <path d="M210 348C250 348 283 385 283 435H210Z" {...S} />
      </Ico>
      <div className={line} />
      <Ico b={[147, 498, 187, 576]} w={74} h={192}>
        <Grip y={528} />
        <rect x="202" y="606" width="81" height="66" {...F} />
        <path d="M208 612H227V636H208ZM233 642H252V666H233ZM258 642H277V666H258Z" fill="#8a8a8a" /><path d="M258 612H277V636H258ZM208 642H227V666H208Z" fill="#6a6a6a" />
        <path d="M223 822H268V858L264 864H227L223 858Z" {...F} />
        <path d="M236 822L216 785M246 822L239 775M254 822L270 790" stroke={G} strokeWidth="2" />
        <path d="M212 765L222 785L228 800L218 804L208 790ZM231 745H243V762H249V778L233 780L229 764ZM254 778C262 768 280 768 288 790V796H272Z" {...F} />
        <ellipse cx="245" cy="942" rx="18" ry="21" {...F} /><ellipse cx="222" cy="974" rx="18" ry="21" {...F} /><ellipse cx="268" cy="974" rx="18" ry="21" {...F} />
        <path d="M240 960H250L253 1000L260 1014H273V1020H217V1014H230L237 1000Z" {...F} />
      </Ico>
      <div className={line} />
      <Ico b={[147, 1080, 187, 576]} w={74} h={192}>
        <Grip y={1110} />
        <path d="M202 1182H288V1188H202ZM202 1206H288V1218H202ZM202 1236H288V1254H202Z" {...F} />
        <rect x="204.500" y="1353" width="81" height="66" fill="url(#ramp)" {...S} />
        <ellipse cx="229" cy="1544" rx="32" ry="38" {...F} />
        <ellipse cx="254" cy="1572" rx="31" ry="37" fill="#7d7d7d" fillOpacity=".85" {...S} />
      </Ico>
      <div className={line} />
      <Ico b={[147, 132, 187, 240]} w={74} h={80}>
        <Grip y={162} />
        <path d="M219 270V231H286V309H248" {...S} />
        <path d="M212 288H248V324H212Z" {...F} /><rect x="222" y="298" width="15" height="14" fill="#535353" />
        <rect x="204" y="273" width="26" height="30" fill="#535353" {...S} />
      </Ico>
      <div className={line} />
    </div>
  );
}

/* ------------------------------------------------------------ right panels */

function Tab({ w, cls, active, children }: { w: number; cls: string; active?: boolean; children: string }) {
  return (
    <div className={"flex h-full items-center overflow-hidden border-r-2 border-[#383838] pl-[18px] " + cls + (active ? " h-[54px]! shrink-0 bg-[#535353] text-[#f4f4f4]" : "")}>
      <Txt w={w} className="pb-[3px]">{children}</Txt>
    </div>
  );
}

function Tabs({ children }: P) {
  return (
    <div className={"relative flex h-[54px] items-start border-b-2 border-[#383838] bg-[#424242] text-[21px] font-bold text-[#b0b0b0] " + UI}>
      {children}
      <div className="absolute top-[19px] right-[12px] flex flex-col gap-[5px]">
        {[0, 1, 2].map((i) => <div key={i} className="h-[2px] w-[21px] bg-[#b8b8b8]" />)}
      </div>
    </div>
  );
}

const trash = (c: string) => (
  <Ico b={[1366, 1368, 54, 72]} w={21} h={24}>
    <path d="M1366 1383H1420M1383 1380L1386 1371H1400L1403 1380M1372 1384V1438H1414V1384M1383 1392V1430M1393 1392V1430M1403 1392V1430" stroke={c} strokeWidth="2" />
  </Ico>
);
const plusBox = (
  <Ico b={[0, 0, 22, 24]} w={22} h={24}><path d="M1 1H21V23H1ZM6 12H16M11 7V17" stroke={G} strokeWidth="2" /></Ico>
);

function Libraries() {
  return (
    <div className="flex h-[482px] flex-col bg-[#535353]">
      <Tabs>
        <Tab w={53} cls="w-[92px]">Links</Tab>
        <Tab w={90} cls="w-[123px] pl-[17px]!" active>Libraries</Tab>
        <Tab w={151} cls="w-[186px] pl-[17px]!">Document Info</Tab>
      </Tabs>
      <div className="mx-[16px] mt-[10px] flex h-[46px] items-center border-b-2 border-[#6a6a6a]">
        <Ico b={[0, 0, 19, 19]} w={19} h={19} className="ml-[1px]"><circle cx="7.500" cy="7.500" r="6" stroke="#fff" strokeWidth="2.400" /><path d="M12 12L18 18" stroke="#fff" strokeWidth="3.200" /></Ico>
        <Txt w={327} className={"mt-[4px] ml-[10px] text-[23px] text-[#7f7f7f] italic " + HV}>Search libraries and Adobe Stock</Txt>
      </div>
      <div className="mx-[16px] mt-[16px] flex h-[38px] items-center rounded-[5px] border-2 border-[#666] bg-[#454545]">
        <Txt w={117} className={"ml-[20px] text-[23px] text-white " + HV}>Your Library</Txt>
        <Chev w={14} h={8} s={3.400} className="mr-[11px] ml-auto" />
      </div>
      <div className="mt-[9px] flex h-[48px] items-center pl-[16px]">
        <Txt w={126} className={"text-[23px] text-white " + HV}>View by type</Txt>
        <Chev w={14} h={8} s={3.400} className="mt-[6px] ml-[11px]" />
        <div className="ml-auto flex h-[40px] w-[40px] items-center justify-center rounded-[6px] border-2 border-[#666] bg-[#303030]">
          <div className="grid grid-cols-2 gap-[4px]">{[0, 1, 2, 3].map((i) => <div key={i} className="size-[10px] rounded-[1px] bg-[#dedede]" />)}</div>
        </div>
        <Ico b={[0, 0, 26, 26]} w={26} h={26} className="mr-[24px] ml-[12px]">
          <path d="M0 3.500H6M0 13H6M0 23H6" stroke="#dedede" strokeWidth="6" /><path d="M10 3H26M10 13H26M10 23H26" stroke="#dedede" strokeWidth="2.200" />
        </Ico>
      </div>
      <div className="mt-[4px] flex h-[208px] flex-col overflow-hidden border-y-2 border-[#464646] bg-[#4d4d4d]">
        <Ico b={[577, 825, 760, 444]} w={301} h={148} className="mt-[19px] ml-[90px]">
          <g stroke="#a6a6a6" strokeWidth="4" strokeLinejoin="round">
            <rect x="582" y="980" width="225" height="181" rx="6" />
            <path d="M592 1158L668 1066L744 1158M718 1124L744 1096L798 1158" strokeWidth="3.400" />
            <ellipse cx="761" cy="1031" rx="20" ry="24" />
            <path d="M938 1164H880C860 1164 848 1152 848 1130V865C848 845 860 834 880 834H1003C1015 834 1020 838 1028 848L1062 890C1068 898 1071 905 1071 918V1130C1071 1150 1060 1164 1040 1164H982" strokeLinecap="round" />
            <path d="M888 1058H1031M888 1104H1031M960 1134V1262M914 1208L960 1262L1006 1208" strokeLinecap="round" />
            <path d="M1120 980H1312C1322 980 1330 988 1330 1002V1143C1330 1156 1322 1165 1312 1165H1140C1128 1165 1120 1156 1120 1143V968C1120 955 1128 948 1140 948H1198C1210 948 1215 960 1224 976" />
          </g>
        </Ico>
        <div className={"mt-[25px] flex justify-center text-[26px] leading-[30px] text-[#cfcfcf] " + HV}><Txt w={366}>Build a Creative Cloud library</Txt></div>
      </div>
      <div className="flex flex-1 items-center pt-[2px] pl-[20px]">
        <Ico b={[400, 1422, 82, 78]} w={33} h={26}><path d="M400 1452H424V1422H436V1452H460V1464H436V1494H424V1464H400ZM458 1482H482L470 1500Z" fill="#dedede" /></Ico>
        <Ico b={[516, 1422, 81, 78]} w={32} h={26} className="ml-[13px]"><path d="M516 1422H548L556 1435H597V1500H516Z" fill="#dedede" /><path d="M520 1428H545L552 1438H520Z" fill="#535353" /></Ico>
        <Txt w={47} className={"ml-auto text-[22px] text-white " + HV}>-- KB</Txt>
        <Ico b={[1301, 1420, 104, 80]} w={41} h={27} className="mr-[21px] ml-[21px]"><path d="M1318 1500C1295 1500 1296 1464 1314 1465C1314 1445 1330 1440 1340 1446C1345 1412 1382 1410 1386 1452C1412 1455 1410 1500 1388 1500Z" fill="#dedede" /></Ico>
        <div className="mr-[20px]">{trash("#858585")}</div>
      </div>
    </div>
  );
}

function Variables() {
  const c = "flex h-full items-center justify-center rounded-t-[5px] border-2 border-b-0 border-[#6e6e6e] pt-px ";
  return (
    <div className={"flex h-[482px] flex-col bg-[#535353] text-[21px] text-white " + UI}>
      <Tabs>
        <Tab w={94.500} cls="w-[132px]" active>Variables</Tab>
        <Tab w={118} cls="w-[134px] pl-[16px]!">Appearance</Tab>
        <Tab w={128} cls="w-[136px] pl-[16px]!">Asset Export</Tab>
      </Tabs>
      <div className="mt-[14px] flex h-[38px] items-center pl-[20px]">
        <Ico b={[400, 252, 70, 66]} w={28} h={22} className="mt-[6px]"><path fillRule="evenodd" d="M400 264H415L423 252H446L454 264H470V318H400ZM420 288A15 17 0 1 0 450 288A15 17 0 1 0 420 288ZM426 288A9 11 0 1 0 444 288A9 11 0 1 0 426 288Z" fill="#7d7d7d" /></Ico>
        <Txt w={86} className="mt-[2px] ml-[11px] text-[#858585]">Data Set:</Txt>
        <div className="ml-[13px] flex h-full w-[216px] items-center justify-end rounded-[4px] bg-[#5a5a5a] pr-[12px]"><Chev w={14} h={8} s={2} c="#7d7d7d" /></div>
        <Ico b={[0, 0, 60, 24]} w={60} h={24} className="mt-[6px] ml-[18px]"><path d="M14 0V24L0 12ZM46 0V24L60 12Z" fill="#7d7d7d" /></Ico>
      </div>
      <div className="mx-[10px] mt-[6px] flex h-[43px]">
        <div className={c + "w-[51px]"}><Txt w={12}>T</Txt></div>
        <div className={c + "w-[199px] border-l-0"}><Txt w={88}>Variables</Txt></div>
        <div className={c + "w-[210px] border-l-0"}><Txt w={73}>Objects</Txt></div>
      </div>
      <div className="mx-[10px] flex h-[289px] flex-col items-center border-2 border-[#606060]">
        <div className="mt-[58px] w-[332px] leading-[24px] text-[#d4d4d4]">
          <Txt w={309}>Import a data source file in XML</Txt>
          <Txt w={136}>or CSV format</Txt>
        </div>
        <div className="mt-[25px] mr-[2px] flex h-[38px] w-[142px] items-center justify-center rounded-full border-2 border-white pt-px"><Txt w={64}>Import</Txt></div>
        <div className="mt-[31px] border-b-2 border-dotted border-white leading-[27px]"><Txt w={107}>Learn More</Txt></div>
      </div>
      <div className="flex flex-1 items-center pl-[28px]">
        <Ico b={[420, 1374, 40, 60]} w={16} h={20} className="mb-[2px]"><path d="M420 1398H460V1434H420Z" {...F} /><path d="M428 1398V1386C428 1376 440 1374 447 1378" {...S} /><path d="M437 1408H443V1424H437Z" fill="#444" /></Ico>
        <div className="ml-auto flex items-center pr-[57px]">
          <Ico b={[824, 1374, 87, 66]} w={34} h={22}><circle cx="844" cy="1416" r="9" stroke="#707070" strokeWidth="2" /><path d="M844 1395V1438M825 1416H863M831 1401L857 1431M857 1401L831 1431" stroke="#707070" strokeWidth="1.500" /><circle cx="844" cy="1416" r="6" fill="#535353" /><path d="M866 1386V1374H878V1382H892V1374H905V1386H910V1422H870V1405L860 1390Z" fill="#707070" /></Ico>
          <Ico b={[957, 1374, 84, 66]} w={33} h={22} className="ml-[19px]"><circle cx="977" cy="1416" r="9" stroke="#707070" strokeWidth="2" /><path d="M977 1395V1438M958 1416H996M964 1401L990 1431M990 1401L964 1431" stroke="#707070" strokeWidth="1.500" /><circle cx="977" cy="1416" r="6" fill="#535353" /><path fillRule="evenodd" d="M985 1396C1000 1366 1026 1366 1041 1396C1026 1424 1005 1422 1000 1412ZM1002 1395A11 13 0 1 0 1024 1395A11 13 0 1 0 1002 1395Z" fill="#707070" /><circle cx="1012" cy="1393" r="6" fill="#707070" /></Ico>
          <Ico b={[1097, 1370, 72, 76]} w={28} h={25} className="ml-[22px]"><path d="M1120 1391H1115C1095 1391 1095 1422 1115 1422H1125M1138 1391H1150C1170 1391 1172 1420 1150 1422M1102 1372L1163 1444" stroke="#747474" strokeWidth="3" /></Ico>
          <div className="ml-[28px]">{plusBox}</div>
          <div className="ml-[28px]">{trash("#707070")}</div>
        </div>
      </div>
    </div>
  );
}

function LayerRow({ name, bar, sel, children }: P & { name: string; bar: string; sel?: boolean }) {
  return (
    <div className={"relative flex h-[42px] items-center border-b-2 border-[#606060] " + (sel ? "bg-[#55677a]" : "")}>
      <div className="flex h-full w-[43px] items-center border-r-2 border-[#606060] pl-[7px]">
        <Ico b={[397, 249, 61, 43]} w={24} h={15} className="mb-[4px]"><path d="M397 271C412 241 443 241 458 271C443 299 412 299 397 271Z" {...F} /><ellipse cx="428" cy="270" rx="12" ry="14" fill="#4f5862" /><ellipse cx="428" cy="270" rx="7" ry="8" {...F} /></Ico>
      </div>
      <div className="h-full w-[42px] border-r-2 border-[#606060]" />
      <div className="flex h-full w-[12px] items-center border-r-2 border-[#606060] pl-[2px]"><div className={"h-[36px] w-[6px] " + bar} /></div>
      <Chev d="right" w={7} h={15} className="ml-[13px]" />
      <div className="ml-[27px] h-[36px] w-[36px] border-2 border-black bg-white">{children}</div>
      <Txt w={69} className="mt-[2px] ml-[10px] text-[#dcdcdc]">{name}</Txt>
      <div className="mr-[41px] ml-auto flex h-full items-center border-l-2 border-[#606060] pl-[12px]"><div className="size-[17px] rounded-full border-2 border-[#bcbcbc]" /></div>
      {sel && <div className="absolute top-0 right-0 size-0 border-t-[12px] border-l-[12px] border-t-[#d8d8d8] border-l-transparent" />}
    </div>
  );
}

function Layers() {
  return (
    <div className={"flex h-[482px] flex-col bg-[#535353] text-[21px] text-white " + UI}>
      <Tabs>
        <Tab w={65} cls="w-[104px]" active>Layers</Tab>
        <Tab w={102} cls="w-[138px] pl-[16px]!">Artboards</Tab>
      </Tabs>
      <div className="mx-[10px] mt-[12px] h-[378px] rounded-[5px] border-2 border-[#606060]">
        <LayerRow name="Layer 2" bar="bg-[#f05b58]" sel>
          <Ico b={[0, 0, 32, 32]} w={32} h={32}><path d="M4 8L5 14M9 14H16M20 6V22M25 8V18M28 14H31M18 24H24M16 28V30" stroke="#f6b4b4" strokeWidth="1.200" strokeDasharray="1.500 2" /></Ico>
        </LayerRow>
        <LayerRow name="Layer 1" bar="bg-[#5580f5]">
          <Ico b={[614, 344, 1240, 1105]} w={32} h={32}><Shapes sw={0.6} /></Ico>
        </LayerRow>
      </div>
      <div className="flex flex-1 items-center pl-[11px] text-[#d4d4d4]">
        <Txt w={78} className="pt-[2px]">2 Layers</Txt>
        <div className="ml-auto flex items-center pr-[57px]">
          <Ico b={[707, 1362, 62, 72]} w={24} h={24}><path d="M725 1378H709V1432H757V1400M738 1396L766 1366M750 1364H767V1384" {...S} /></Ico>
          <Ico b={[838, 1362, 64, 72]} w={25} h={24} className="ml-[28px]"><ellipse cx="862" cy="1389" rx="21" ry="25" stroke="#707070" strokeWidth="2" /><path d="M877 1408L898 1432" stroke="#707070" strokeWidth="4" /></Ico>
          <Ico b={[970, 1368, 58, 66]} w={23} h={22} className="ml-[27px]"><rect x="987" y="1388" width="38" height="44" stroke="#8a8a8a" strokeWidth="2" /><rect x="972" y="1370" width="38" height="44" {...S} /><rect x="986" y="1387" width="25" height="28" {...F} /></Ico>
          <Ico b={[1092, 1368, 76, 66]} w={30} h={23} className="ml-[25px]"><path d="M1094 1368V1394H1112M1126 1376H1166V1426H1126ZM1135 1401H1156M1146 1389V1414" {...S} /><path d="M1106 1382L1120 1394L1106 1408Z" {...F} /></Ico>
          <div className="ml-[28px]">{plusBox}</div>
          <div className="ml-[28px]">{trash(G)}</div>
        </div>
      </div>
    </div>
  );
}

function RightSide() {
  const sep = <div className="h-[6px] border-y-2 border-[#3a3a3a] bg-[#484848]" />;
  return (
    <div className="flex w-[560px] flex-col">
      <div className="flex h-[24px] items-center justify-between border-b-2 border-[#3a3a3a] bg-[#434343] pr-[13px] pl-[50px]">
        <div className="flex gap-[5px]"><Chev d="left" w={4} h={8} s={1.800} c={G} /><Chev d="left" w={4} h={8} s={1.800} c={G} /></div>
        <div className="flex gap-[5px]"><Chev d="right" w={4} h={8} s={1.800} c={G} /><Chev d="right" w={4} h={8} s={1.800} c={G} /></div>
      </div>
      <div className="flex h-[1458px]">
        <Strip />
        <div className="w-[6px] border-x-2 border-[#3a3a3a] bg-[#484848]" />
        <div className="flex w-[480px] flex-col">
          <Libraries />
          {sep}
          <Variables />
          {sep}
          <Layers />
        </div>
      </div>
    </div>
  );
}

/* -------------------------------------------------------------------- dock */

function Dk({ run, children }: P & { run?: boolean }) {
  return (
    <svg viewBox="0 0 94 112" width="94" height="112" fill="none" className="block shrink-0">
      {children}
      {run && <circle cx="47" cy="104" r="4" fill="#120804" />}
    </svg>
  );
}

const Chrome = () => (
  <g>
    <circle cx="47" cy="53" r="39" fill="#f7cd55" />
    <path d="M47 53L13.200 33.500A39 39 0 0 0 45 92L63 64Z" fill="#4a9f62" />
    <path d="M31 62L13.200 33.500A39 39 0 0 1 82 36H47Z" fill="#d5503f" />
    <circle cx="47" cy="53" r="18" fill="#fff" /><circle cx="47" cy="53" r="14.500" fill="#4f87ee" />
  </g>
);
const Adobe = ({ bg, fg, t }: { bg: string; fg: string; t: string }) => (
  <g><rect x="5" y="9" width="84" height="83" rx="15" fill={bg} /><text x="47" y="68" textAnchor="middle" fontFamily="Open Sans, sans-serif" fontWeight="600" fontSize="51" letterSpacing="-1.500" fill={fg}>{t}</text></g>
);
const PagesDoc = () => (
  <g>
    <path d="M11 22L70 11L82 84L23 94Z" fill="#fafafa" /><path d="M11 22L70 11L72 23L13 34Z" fill="#f39a32" />
    <text transform="translate(18 30) rotate(-10)" fontFamily="Lato, sans-serif" fontSize="10.500" fontWeight="700" fill="#fff">PAGES</text>
    <path d="M20 38L46 33L49 52L23 57Z" fill="#3b9ee8" /><path d="M27 42L33 40L40 37L38 48L35 54L31 50Z" fill="#f28a1d" />
    <path d="M51 33L70 30M52 37L70 34M53 41L70 38M54 45L66 43M25 62L60 56M26 66L60 60M27 70L60 64M29 76L56 71M30 80L56 75M31 84L54 80" stroke="#999" strokeWidth="1" />
    <path d="M76 15L63 66" stroke="#f09a2a" strokeWidth="7" strokeLinecap="round" /><path d="M63 62L57 86" stroke="#333" strokeWidth="6" /><path d="M54 84L60 86L54 94Z" fill="#ccc" />
  </g>
);

function Dock() {
  const gear = Array.from({ length: 24 }, (_, i) => i * 15);
  return (
    <div className="mx-[76px] flex h-[112px] shrink-0 rounded-t-[12px] bg-[linear-gradient(90deg,#606064_0%,#606062_12%,#70605c_18%,#86645a_24%,#9c7062_29%,#b47f70_32%,#94706a_35%,#6c6668_38%,#636268_42%,#6c6a68_45%,#7c7e70_48%,#7e7c70_53%,#8a7463_57%,#7f7d70_61%,#808378_65%,#6a6967_69%,#656263_75%,#646162_100%)] pl-[6px]">
      <Dk run>
        <rect x="11" y="19" width="73" height="68" rx="4" fill="#e4edf6" /><path d="M15 19H50C45 32 43 45 43 58H53C53 70 54 78 55 87H15Q11 87 11 83V23Q11 19 15 19Z" fill="url(#finder)" />
        <path d="M50 19C45 32 43 45 43 58H53C53 70 54 78 55 87" stroke="#1c2c44" strokeWidth="1.500" /><path d="M31 37V43M64 37V43" stroke="#102038" strokeWidth="3.500" strokeLinecap="round" /><path d="M26 62C36 74 60 74 70 62" stroke="#102038" strokeWidth="3" strokeLinecap="round" />
      </Dk>
      <Dk>
        <circle cx="47" cy="53" r="39" fill="#f2f4f6" /><circle cx="47" cy="53" r="35.500" fill="url(#safari)" />
        <circle cx="47" cy="53" r="31.500" stroke="#eaf6ff" strokeWidth="5" strokeDasharray="1 2.300" />
        <path d="M73 27L51 57L43 49Z" fill="#e5402f" /><path d="M21 79L43 49L51 57Z" fill="#eee" />
      </Dk>
      <Dk run><Chrome /></Dk>
      <Dk>
        <rect x="8" y="19" width="71" height="63" rx="12" fill="url(#green)" /><rect x="19" y="35" width="34" height="31" rx="7" fill="#f4f6f4" /><path d="M55 47L69 36V64L55 54Z" fill="#f4f6f4" />
        <circle cx="68" cy="67" r="20" fill="#f2f4f2" /><path d="M59 56C55 62 66 82 78 78L79 73L73 69L70 72C66 70 64 66 64 63L66 60L63 54Z" fill="#5bcd4e" />
        <circle cx="76" cy="24.500" r="17" fill="#e04b3e" /><text x="76" y="32" textAnchor="middle" fontSize="21" fontFamily="Inter, sans-serif" fill="#fff">2</text>
      </Dk>
      <Dk>
        <path d="M10 26L70 15L84 82L20 91Z" fill="#66707a" /><path d="M12 21L70 15L81 77L21 88Z" fill="#fafafa" /><path d="M12 21L70 15L73 33L14 41Z" fill="#d85a50" />
        <text transform="translate(43 33) rotate(-8)" textAnchor="middle" fontSize="14" fontFamily="Lato, sans-serif" fill="#fff">OCT</text><text transform="translate(49 73) rotate(-8)" textAnchor="middle" fontSize="38" fontFamily="Lato, sans-serif" fill="#222">20</text>
      </Dk>
      <Dk>
        <path d="M15 24Q15 20 19 19L66 12Q70 12 70 16L82 77Q82 82 78 82L31 90Q27 90 26 86Z" fill="#f8f8f8" />
        {["#3f7eee", "#d8564a", "#e6a044", "#5c5f63"].map((c, i) => <g key={c}><circle cx={26 + i * 2.2} cy={33 + i * 14} r="5" fill={c} /><path d={`M${35 + i * 2} ${31 + i * 14}L${68 + i * 2} ${26 + i * 14}`} stroke="#aaa" /></g>)}
      </Dk>
      <Dk run>
        <ellipse cx="47.500" cy="49" rx="38.500" ry="32" fill="url(#msg)" /><path d="M24 70C25 78 24 84 20 87C30 87 38 82 42 76Z" fill="#3f8df2" />
        <ellipse cx="62" cy="68" rx="23" ry="19" fill="#e8f3fa" /><path d="M64 84L78 89L76 78Z" fill="#e8f3fa" />{[52, 62, 72].map((x) => <circle key={x} cx={x} cy="68" r="4" fill="#245fa8" />)}
      </Dk>
      <Dk run>
        <circle cx="47" cy="53" r="39" fill="#63d46e" /><g stroke="#111" strokeLinecap="round"><path d="M24 40C38 35 58 37 72 45" strokeWidth="8" /><path d="M27 54C40 50 54 52 66 59" strokeWidth="6.500" /><path d="M29 67C40 64 51 65 61 71" strokeWidth="5.500" /></g>
      </Dk>
      <Dk><path d="M44 11L56 35L88 33L71 57L81 84L57 73L31 92L36 65L7 45L37 37Z" fill="url(#imovie)" stroke="#d9dbe4" strokeWidth="4" strokeLinejoin="round" /><path d="M36 48L54 45L56 58L38 61ZM56 50L63 45L63 58L57 55Z" fill="#dfe3f4" /></Dk>
      <Dk><circle cx="47" cy="53" r="37.500" fill="#5b72bd" stroke="#f0f2f6" strokeWidth="3" /><FaDiscord x={21} y={27} size={52} color="#fff" fill="#fff" /></Dk>
      <Dk>
        <rect x="5" y="9" width="84" height="83" rx="15" fill="url(#cc1)" /><rect x="5" y="9" width="84" height="83" rx="15" fill="url(#cc2)" />
        <path d="M33 73C22 73 17 65 17 57C17 48 24 42 31 41C36 31 45 27 54 27C68 27 78 38 78 50C78 64 68 74 55 74Z" stroke="#fff" strokeWidth="3.500" />
        <path d="M53 34C63 34 71 41 71 51C71 60 64 67 56 67C48 67 44 62 40 58L46 53C50 58 53 60 57 59C62 58 64 54 62 49C60 43 53 40 47 43L43 38C46 35 50 34 53 34Z" fill="#fff" />
        <path d="M50 67L38 55C34 51 28 54 28 59C28 64 33 66 37 65L42 62L47 67M43 40L58 55" stroke="#fff" strokeWidth="4" strokeLinecap="round" />
      </Dk>
      <Dk><Adobe bg="#071e34" fg="#50a7f8" t="Ps" /></Dk>
      <Dk run><Adobe bg="#2e0203" fg="#f29b36" t="Ai" /></Dk>
      <Dk><Adobe bg="#03034f" fg="#9c9cf8" t="Pr" /></Dk>
      <Dk run>
        <rect x="6" y="13" width="81" height="81" rx="12" fill="#2a6299" /><rect x="6" y="13" width="81" height="73" rx="12" fill="url(#brk)" /><rect x="15" y="21" width="64" height="57" rx="7" fill="#fff" />
        <path d="M44 28H21V71H44V61H31V38H44ZM49 28H72V71H49V61H62V38H49Z" fill="#4b4b4b" />
      </Dk>
      <Dk>
        <path d="M12 20L71 11L83 84L23 93Z" fill="#f7f7f3" /><path d="M12 20L71 11L73 25L14 33Z" fill="#f6cf45" />
        {Array.from({ length: 8 }, (_, i) => <path key={i} d={`M${15 + i} ${39 + i * 6.6}L${74 + i} ${30 + i * 6.6}`} stroke="#c9c9c9" />)}
      </Dk>
      <Dk><circle cx="47" cy="53" r="38.500" fill="#f6f6f9" stroke="#d5d7de" strokeWidth="2" /><path d="M37 73V36L64 30V66" stroke="url(#note)" strokeWidth="3.500" /><path d="M36 34L65 28V38L36 44Z" fill="#ec5a6e" /><ellipse cx="32.500" cy="71" rx="7" ry="5.500" fill="#8068f0" /><ellipse cx="58" cy="66" rx="7" ry="5.500" fill="#4f9cf5" /></Dk>
      <Dk run><PagesDoc /></Dk>
      <Dk>
        <rect x="9" y="17" width="77" height="72" rx="4" fill="url(#steel)" />
        <circle cx="47" cy="53" r="31" fill="#262626" />
        {gear.map((a) => <rect key={a} x="45.400" y="24" width="3.200" height="6" fill="#a5a5a5" transform={`rotate(${a} 47 53)`} />)}
        <circle cx="47" cy="53" r="22" stroke="#8e8e8e" strokeWidth="5" /><path d="M47 53L66 53M47 53L37 36M47 53L37 70" stroke="#9a9a9a" strokeWidth="5" /><circle cx="47" cy="53" r="5" fill="#bbb" />
      </Dk>
      <div className="flex w-[42px] shrink-0 items-center justify-center"><div className="h-[84px] w-[2px] bg-[#44453f]" /></div>
      <Dk run>
        <circle cx="47" cy="53" r="39" fill="#f6f6f6" />
        <g strokeWidth="9.500" strokeLinecap="round"><path d="M41 34V34.100M27 47H41" stroke="#6cc5ec" /><path d="M53 33V47M66 47V47.100" stroke="#5fb589" /><path d="M53 60H67M53 73V73.100" stroke="#e2b04a" /><path d="M41 60V73M28 60V60.100" stroke="#cd3257" /></g>
      </Dk>
      <Dk run><Chrome /></Dk>
      <Dk run>
        <circle cx="50" cy="51" r="34" fill="#9c9c9c" />
        <path d="M46 28C52 26 56 42 66 48C76 52 84 38 90 52L66 82L48 68L30 56Z" fill="url(#mesh)" />
        <path d="M6 44C16 56 22 52 34 44C44 56 52 66 64 78L44 88L40 92L30 80L16 84L5 70Z" fill="#b98834" />
        {Array.from({ length: 9 }, (_, i) => <path key={i} d={`M${8 + i * 4} ${50 - i * 0.5}C${10 + i * 5} 60 ${18 + i * 5} 66 ${10 + i * 5} ${78 + i}`} stroke="#4a3315" strokeWidth="1.200" />)}
        {[0, 1, 2, 3].map((i) => <path key={i} d={`M5 ${56 + i * 7}C18 ${72 + i * 3} 30 ${66 + i * 5} 42 ${78 + i * 3}`} stroke="#4a3315" strokeWidth="1" />)}
        {[0, 1, 2, 3, 4].map((i) => <path key={i} d={`M${36 + i * 4} ${44 - i * 3}C${44 + i * 4} 56 ${52 + i * 3} 68 ${62 + i * 3} ${78 - i * 4}`} stroke="#123049" strokeWidth="1" />)}
      </Dk>
      <Dk run>
        <path d="M17 19H82V76L17 66Z" fill="#eee" /><path d="M20 22H79V72H20Z" fill="#9c8257" />
        <path d="M7 36L73 22L80 72L15 86Z" fill="#fff" /><path d="M10 39L71 26L73 44L13 58Z" fill="#7fb0e4" /><path d="M13 54L73 42L76 62L16 72Z" fill="#2f5f9a" /><path d="M15 68L40 60L60 74L17 83Z" fill="#5a4a3c" /><path d="M20 64L44 58L50 68L30 70Z" fill="#dfe8ee" />
        <path d="M57 62V82Q70 94 83 80V62Z" fill="#6b5d50" /><circle cx="70" cy="60" r="15" fill="#2a2f33" stroke="#aaa" strokeWidth="2.500" /><circle cx="70" cy="60" r="10" fill="#8d8a84" />
      </Dk>
      <Dk run>
        <rect x="2" y="8" width="90" height="90" fill="#fdf4ee" /><rect x="5" y="12" width="84" height="82" fill="#f4d5b8" /><path d="M5 60C30 58 70 62 89 82V94H5Z" fill="#f8e4d2" />
        <path d="M29 22L42 17H69V30H52C49 32 48 38 48 44L55 43H67V55H56C47 58 46 66 46 78H29Z" fill="#d9843b" /><path d="M29 22L42 27C46 45 45 60 40 74L29 78Z" fill="#b4611f" />
        <text x="63" y="91" textAnchor="middle" fontSize="17" fontFamily="Roboto, sans-serif" fill="#c0722f">360</text>
      </Dk>
      <div className="flex w-[42px] shrink-0 items-center justify-center"><div className="h-[84px] w-[2px] bg-[#333]" /></div>
      <Dk>
        <path d="M10 15H17V10H58L84 42V94H10Z" fill="#f6f8fa" /><path d="M14 20V92M22 14V92M30 14V92M62 60V92M70 60V92M78 60V92M12 26H64M12 34H66M12 42H70M12 82H82M12 88H82" stroke="#c6dcea" strokeWidth=".8" />
        <g transform="translate(17 37) scale(.0447 .0458) translate(-626 -482)" className="[&_*]:[vector-effect:non-scaling-stroke]"><Shapes sw={0.8} /></g>
        <path d="M58 10L84 42C76 32 68 36 62 36C64 26 62 16 58 10Z" fill="#dfe3e6" />
      </Dk>
      {[0, 1].map((k) => (
        <Dk key={k}>
          <rect x="5" y="24" width="84" height="58" fill="#fafafa" /><path d="M5 24H89V30H5Z" fill="#e6e6e6" /><rect x="72" y="30" width="17" height="52" fill="#ececec" /><rect x="7" y="33" width="8" height="12" fill="#ddd" />
          {Array.from({ length: 12 }, (_, i) => <path key={i} d={`M22 ${34 + i * 4}H${[54, 48, 60, 44][i % 4]}`} stroke={k === 0 && i % 3 ? "#9a9af0" : "#9b9b9b"} strokeWidth="1.600" />)}
          <g transform="translate(54 54) scale(.43)"><PagesDoc /></g>
        </Dk>
      ))}
      <Dk>
        <path d="M16 24H79L71 84Q70 92 60 93H36Q26 92 24 84Z" fill="#e3e5e6" /><path d="M26 34L32 84M47 36V88M68 34L62 84" stroke="#d3d6d8" strokeWidth="3" />
        <path d="M20 24L30 12L38 18L46 10L56 20L62 12L76 24L66 32H30Z" fill="#f5f5f5" /><path d="M34 26L42 18L44 30ZM54 28L60 20L64 28Z" fill="#3a3f45" /><path d="M44 22L50 18L52 28Z" fill="#7ac6b0" /><ellipse cx="47.500" cy="24" rx="31" ry="8" stroke="#cfd2d4" strokeWidth="2" />
      </Dk>
    </div>
  );
}

function Defs() {
  const lin = (id: string, a: string, b: string, v = true) => (
    <linearGradient id={id} x1="0" y1="0" x2={v ? "0" : "1"} y2={v ? "1" : "0"}><stop stopColor={a} /><stop offset="1" stopColor={b} /></linearGradient>
  );
  return (
    <svg width="0" height="0" className="absolute">
      <defs>
        {lin("ramp", "#262626", "#d8d8d8", false)}{lin("finder", "#5fc6f8", "#2f6fe8")}{lin("safari", "#5bd0f5", "#2366dc")}{lin("green", "#78e983", "#4fc23e")}
        {lin("msg", "#72bdf8", "#2f7ff0")}{lin("imovie", "#a155f0", "#3a23b0")}{lin("brk", "#4ba9df", "#2b76b4")}{lin("note", "#ec5a6e", "#6a7cf5")}
        {lin("steel", "#d3dde5", "#6f7073")}{lin("mesh", "#1d4a78", "#2f86c0")}{lin("cc1", "#e8403a", "#4a8af0")}
        <linearGradient id="cc2" x1="0" y1=".2" x2="1" y2=".8"><stop stopColor="#e83ab8" stopOpacity=".8" /><stop offset=".35" stopColor="#e8403a" stopOpacity=".3" /><stop offset=".65" stopColor="#f5b62e" stopOpacity=".8" /><stop offset="1" stopColor="#7be06a" /></linearGradient>
      </defs>
    </svg>
  );
}

export default function App() {
  return (
    <div className="flex h-[1800px] w-[2880px] flex-col overflow-hidden bg-[#1b1c1d]">
      <Defs />
      <MenuBar />
      <div className="h-[2px] bg-[#0b141e]" />
      <div className="flex h-[1622px] shrink-0 flex-col rounded-t-[10px] border-2 border-[#3a3a3a] bg-[#3a3a3a]">
        <div className="overflow-hidden rounded-t-[9px]"><TitleBar /></div>
        <div className="h-[2px] shrink-0" />
        <ControlBar />
        <div className="h-[2px] shrink-0" />
        <div className="flex h-[1482px]">
          <Toolbar />
          <div className="w-[6px] border-x-2 border-[#3a3a3a] bg-[#484848]" />
          <Document />
          <div className="w-[6px] border-x-2 border-[#3a3a3a] bg-[#484848]" />
          <RightSide />
        </div>
      </div>
      <div className="h-[20px] shrink-0 bg-[linear-gradient(90deg,#141414_486px,#4c4c4c_486px,#4c4c4c_2300px,#5a5a5a_2500px,#a8a8a8_2780px)]">
        <div className="flex h-[6px] w-[2552px] overflow-hidden rounded-b-[6px] border-b-2 border-[#8a8a8a] bg-[#aeaeae] pl-[675px]">
          <Txt w={325} className={"-mt-[11px] text-[26px] leading-[26px] text-[#222] " + SF}>Fusion 360(1) _ 9.22(11).dmg</Txt>
        </div>
      </div>
      <Dock />
    </div>
  );
}
